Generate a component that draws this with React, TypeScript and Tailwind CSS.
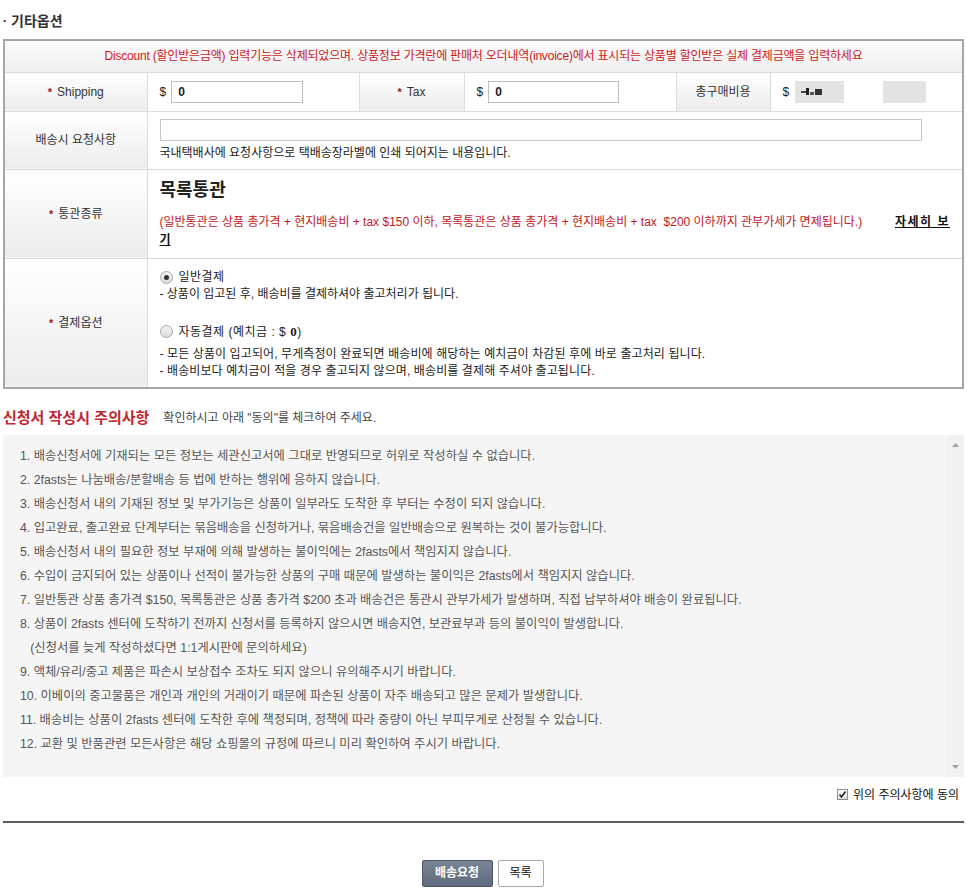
import React from 'react';

const notices = [
    '1. 배송신청서에 기재되는 모든 정보는 세관신고서에 그대로 반영되므로 허위로 작성하실 수 없습니다.',
    '2. 2fasts는 나눔배송/분할배송 등 법에 반하는 행위에 응하지 않습니다.',
    '3. 배송신청서 내의 기재된 정보 및 부가기능은 상품이 일부라도 도착한 후 부터는 수정이 되지 않습니다.',
    '4. 입고완료, 출고완료 단계부터는 묶음배송을 신청하거나, 묶음배송건을 일반배송으로 원복하는 것이 불가능합니다.',
    '5. 배송신청서 내의 필요한 정보 부재에 의해 발생하는 불이익에는 2fasts에서 책임지지 않습니다.',
    '6. 수입이 금지되어 있는 상품이나 선적이 불가능한 상품의 구매 때문에 발생하는 불이익은 2fasts에서 책임지지 않습니다.',
    '7. 일반통관 상품 총가격 $150, 목록통관은 상품 총가격 $200 초과 배송건은 통관시 관부가세가 발생하며, 직접 납부하셔야 배송이 완료됩니다.',
    '8. 상품이 2fasts 센터에 도착하기 전까지 신청서를 등록하지 않으시면 배송지연, 보관료부과 등의 불이익이 발생합니다.',
    '\u00a0\u00a0\u00a0(신청서를 늦게 작성하셨다면 1:1게시판에 문의하세요)',
    '9. 액체/유리/중고 제품은 파손시 보상접수 조차도 되지 않으니 유의해주시기 바랍니다.',
    '10. 이베이의 중고물품은 개인과 개인의 거래이기 때문에 파손된 상품이 자주 배송되고 많은 문제가 발생합니다.',
    '11. 배송비는 상품이 2fasts 센터에 도착한 후에 책정되며, 정책에 따라 중량이 아닌 부피무게로 산정될 수 있습니다.',
    '12. 교환 및 반품관련 모든사항은 해당 쇼핑몰의 규정에 따르니 미리 확인하여 주시기 바랍니다.',
];

function Star() {
    return <span className="mr-[5px] text-[11px] font-bold text-[#a3151c]">*</span>;
}

function Radio({ checked }: { checked?: boolean }) {
    return (
        <span className="inline-flex h-[13px] w-[13px] items-center justify-center rounded-full border border-[#a8a8a8] bg-gradient-to-b from-[#f4f4f4] to-[#dcdcdc]">
            {checked && <span className="h-[5px] w-[5px] rounded-full bg-[#333]" />}
        </span>
    );
}

const labelCell =
    'border border-[#dcdcdc] bg-gradient-to-b from-white to-[#ececec] text-center text-[12px] text-[#333]';
const valueCell = 'border border-[#dcdcdc] bg-white pl-[12px] text-[12px] text-[#222]';

export default function App() {
    return (
        <div className="w-[967px] bg-white px-[3px] pt-[12px] font-['Liberation_Sans','Noto_Sans_CJK_KR',sans-serif] text-[#222]">
            {/* Title */}
            <div className="flex h-[18px] items-center">
                <span className="mr-[4px] text-[12px] font-bold">·</span>
                <span className="text-[14px] font-bold text-[#333]">기타옵션</span>
            </div>

            {/* Options table */}
            <table className="mt-[9px] w-[961px] table-fixed border-collapse border-2 border-[#a6a6a6]">
                <colgroup>
                    <col className="w-[143px]" />
                    <col className="w-[212px]" />
                    <col className="w-[105px]" />
                    <col className="w-[212px]" />
                    <col className="w-[94px]" />
                    <col />
                </colgroup>
                <tbody>
                    <tr className="h-[32px]">
                        <td
                            colSpan={6}
                            className="border border-[#dcdcdc] bg-gradient-to-b from-[#fafafa] to-[#f0f0f0] text-center text-[12px] tracking-[-0.2px] text-[#cc1a1a]"
                        >
                            Discount (할인받은금액) 입력기능은 삭제되었으며. 상품정보 가격란에 판매처 오더내역(invoice)에서 표시되는 상품별 할인받은 실제 결제금액을 입력하세요
                        </td>
                    </tr>
                    <tr className="h-[39px]">
                        <td className={labelCell}>
                            <Star />
                            Shipping
                        </td>
                        <td className={valueCell}>
                            <div className="flex items-center gap-[5px]">
                                <span>$</span>
                                <div className="flex h-[22px] w-[132px] items-center border border-[#bdbdbd] pl-[6px] text-[12px] font-bold">
                                    0
                                </div>
                            </div>
                        </td>
                        <td className={labelCell}>
                            <Star />
                            Tax
                        </td>
                        <td className={valueCell}>
                            <div className="flex items-center gap-[5px]">
                                <span>$</span>
                                <div className="flex h-[22px] w-[131px] items-center border border-[#bdbdbd] pl-[6px] text-[12px] font-bold">
                                    0
                                </div>
                            </div>
                        </td>
                        <td className={labelCell}>총구매비용</td>
                        <td className={valueCell}>
                            <div className="flex items-center gap-[6px]">
                                <span>$</span>
                                <div className="flex h-[22px] w-[131px] items-center bg-[#e3e3e3] pl-[6px]">
                                    <span className="h-[2px] w-[5px] bg-[#444]" />
                                    <span className="h-[7px] w-[3px] bg-[#222]" />
                                    <span className="ml-[1px] mt-[4px] h-[3px] w-[4px] bg-[#555]" />
                                    <span className="ml-[1px] h-[6px] w-[7px] bg-[#333]" />
                                    <span className="ml-[22px] h-[22px] w-[39px] bg-white" />
                                </div>
                            </div>
                        </td>
                    </tr>
                    <tr className="h-[58px]">
                        <td className={labelCell}>배송시 요청사항</td>
                        <td colSpan={5} className={valueCell}>
                            <div className="h-[22px] w-[762px] border border-[#c8c8c8]" />
                            <div className="mt-[3px] text-[12px]">
                                국내택배사에 요청사항으로 택배송장라벨에 인쇄 되어지는 내용입니다.
                            </div>
                        </td>
                    </tr>
                    <tr className="h-[89px]">
                        <td className={labelCell}>
                            <Star />
                            통관종류
                        </td>
                        <td colSpan={5} className={valueCell}>
                            <div className="text-[18px] font-bold leading-[22px] text-[#222]">목록통관</div>
                            <div className="mt-[12px] flex items-center pr-[12px] text-[12px]">
                                <span className="text-[#c4161c]">
                                    (일반통관은 상품 총가격 + 현지배송비 + tax $150 이하, 목록통관은 상품 총가격 + 현지배송비 + tax&nbsp; $200 이하까지 관부가세가 면제됩니다.)
                                </span>
                                <span className="ml-auto font-bold tracking-[1.5px] text-[#111] underline">자세히 보</span>
                            </div>
                            <div className="text-[12px] font-bold text-[#111] underline">기</div>
                        </td>
                    </tr>
                    <tr className="h-[130px]">
                        <td className={labelCell}>
                            <Star />
                            결제옵션
                        </td>
                        <td colSpan={5} className={valueCell}>
                            <div className="flex flex-col pt-[3px] text-[12px] leading-[17px]">
                                <label className="flex items-center gap-[6px] tracking-[0.5px]">
                                    <Radio checked />
                                    일반결제
                                </label>
                                <span>- 상품이 입고된 후, 배송비를 결제하셔야 출고처리가 됩니다.</span>
                                <label className="mt-[20px] flex items-center gap-[6px] tracking-[0.5px]">
                                    <Radio />
                                    <span>
                                        자동결제 (예치금 : $ <b className="font-['Liberation_Serif'] text-[13px]">0</b>)
                                    </span>
                                </label>
                                <span className="mt-[5px] tracking-[0.1px]">
                                    - 모든 상품이 입고되어, 무게측정이 완료되면 배송비에 해당하는 예치금이 차감된 후에 바로 출고처리 됩니다.
                                </span>
                                <span className="tracking-[0.1px]">- 배송비보다 예치금이 적을 경우 출고되지 않으며, 배송비를 결제해 주셔야 출고됩니다.</span>
                            </div>
                        </td>
                    </tr>
                </tbody>
            </table>

            {/* Notices */}
            <div className="mt-[18px] flex items-center">
                <span className="text-[15px] font-bold text-[#c0282f]">신청서 작성시 주의사항</span>
                <span className="ml-[14px] text-[12px] text-[#444]">확인하시고 아래 "동의"를 체크하여 주세요.</span>
            </div>

            <div className="mt-[5px] flex h-[342px] w-[961px] bg-[#f5f5f5]">
                <ul className="flex-1 pl-[17px] pt-[9px] text-[12.3px] leading-[24px] text-[#555]">
                    {notices.map((n) => (
                        <li key={n}>{n}</li>
                    ))}
                </ul>
                <div className="flex w-[17px] flex-col items-center justify-between bg-[#f1f1f1] py-[8px]">
                    <svg width="7" height="4" viewBox="0 0 7 4">
                        <path d="M0 4 L3.5 0 L7 4 Z" fill="#a3a3a3" />
                    </svg>
                    <svg width="7" height="4" viewBox="0 0 7 4">
                        <path d="M0 0 L3.5 4 L7 0 Z" fill="#a3a3a3" />
                    </svg>
                </div>
            </div>

            {/* Agree */}
            <div className="mt-[9px] flex items-center justify-end pr-[5px]">
                <span className="mr-[5px] flex h-[11px] w-[11px] items-center justify-center border border-[#8f8f8f] bg-gradient-to-b from-white to-[#dedede]">
                    <svg width="9" height="9" viewBox="0 0 9 9">
                        <path d="M1.5 4.5 L3.5 7 L7.5 1.5" stroke="#222" strokeWidth="1.6" fill="none" />
                    </svg>
                </span>
                <span className="text-[12px] text-[#111]">위의 주의사항에 동의</span>
            </div>

            <div className="mt-[17px] h-[2px] w-[961px] bg-[#5a5a5a]" />

            {/* Buttons */}
            <div className="mt-[37px] flex justify-center gap-[5px] pr-[2px]">
                <button className="h-[27px] w-[71px] rounded-[2px] border border-[#4b5563] bg-gradient-to-b from-[#7a8698] to-[#5f6b7d] text-[12px] font-bold text-white">
                    배송요청
                </button>
                <button className="h-[27px] w-[46px] rounded-[2px] border border-[#a9a9a9] bg-white text-[12px] text-[#111]">
                    목록
                </button>
            </div>
        </div>
    );
}
